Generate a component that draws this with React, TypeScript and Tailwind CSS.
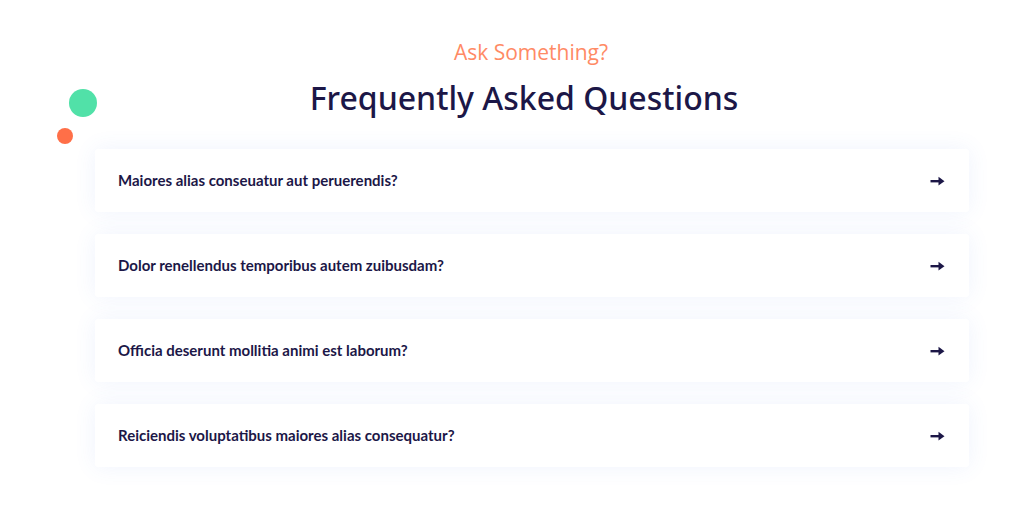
const questions = [
  "Maiores alias conseuatur aut peruerendis?",
  "Dolor renellendus temporibus autem zuibusdam?",
  "Officia deserunt mollitia animi est laborum?",
  "Reiciendis voluptatibus maiores alias consequatur?",
];

function Arrow() {
  return (
    <svg width="15" height="10" viewBox="0 0 15 10" className="shrink-0">
      <rect x="0.5" y="4" width="9" height="2.4" fill="#1c1747" />
      <path d="M8.5 0.8 L14.5 5.2 L8.5 9.6 Z" fill="#1c1747" />
    </svg>
  );
}

export default function App() {
  return (
    <main
      className="relative min-h-[528px] w-full bg-white"
      style={{ fontFamily: "Lato, 'Open Sans', sans-serif" }}
    >
      <div className="absolute left-[69px] top-[89px] h-[28px] w-[28px] rounded-full bg-[#51e1a8]" />
      <div className="absolute left-[57px] top-[128px] h-[16px] w-[16px] rounded-full bg-[#ff6f48]" />

      <div className="flex flex-col items-center pt-[37px]">
        <p
          className="pl-[38px] text-[21px] leading-[30px] text-[#ff8a65]"
          style={{ fontFamily: "'Open Sans', sans-serif" }}
        >
          Ask Something?
        </p>
        <h2
          className="mt-[10px] pl-[24px] text-[32px] font-medium leading-[42px] text-[#1c1747]"
          style={{ fontFamily: "'Noto Sans', sans-serif" }}
        >
          Frequently Asked Questions
        </h2>
      </div>

      <div className="mx-[95px] mt-[30px] flex w-[874px] flex-col gap-[22px]">
        {questions.map((q) => (
          <div
            key={q}
            className="flex h-[63px] items-center justify-between rounded-[3px] bg-white pl-[23px] pr-[24px] shadow-[0_0_22px_rgba(80,120,230,0.09)]"
          >
            <span className="text-[15px] font-bold text-[#1c1747]">{q}</span>
            <Arrow />
          </div>
        ))}
      </div>
    </main>
  );
}
